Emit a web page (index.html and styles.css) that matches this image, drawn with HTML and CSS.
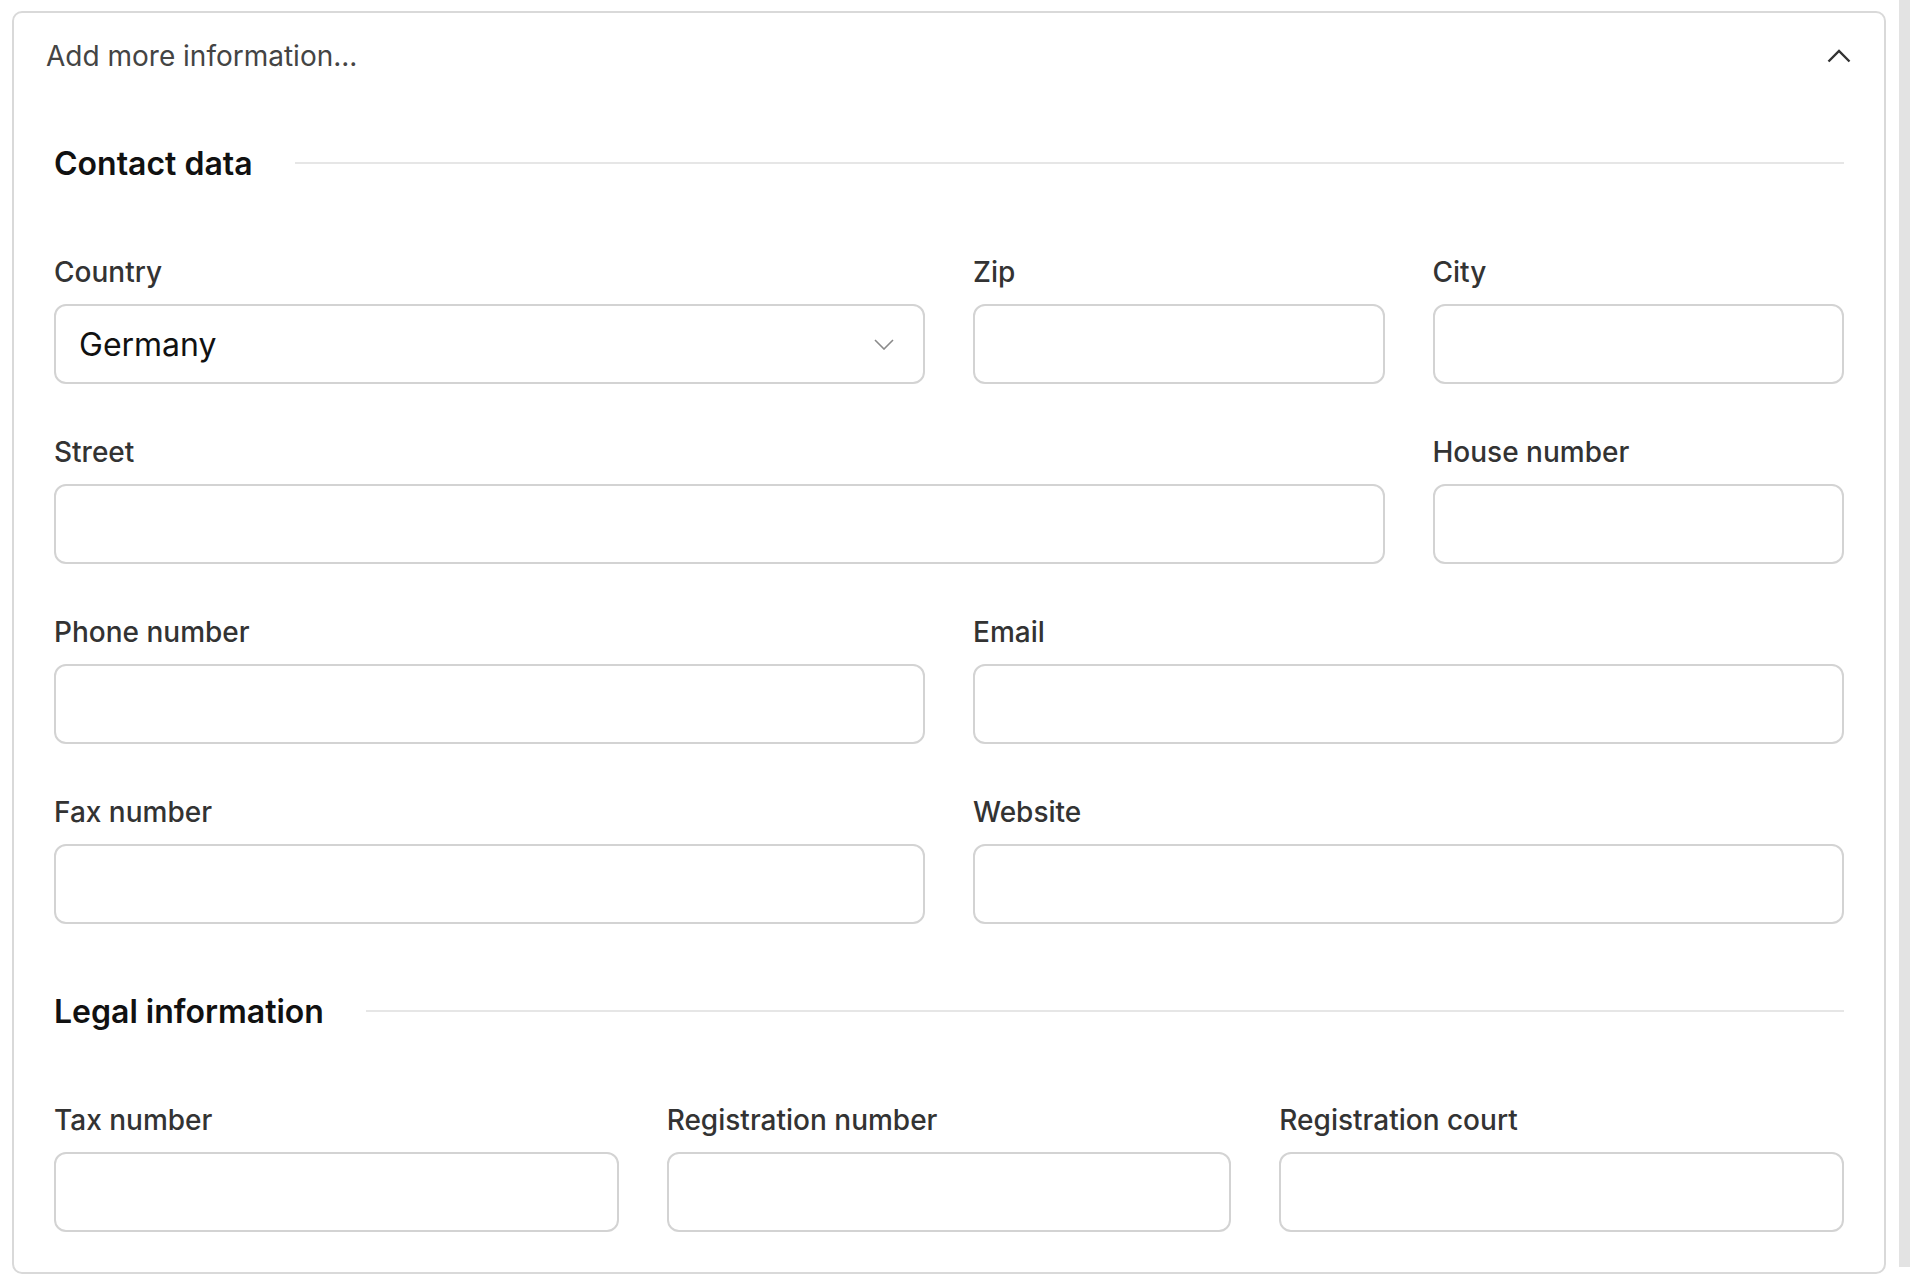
FILE: index.html
```html
<!DOCTYPE html>
<html lang="en">
<head>
    <meta charset="UTF-8">
    <meta name="viewport" content="width=device-width, initial-scale=1.0">
    <title>Add more information</title>
    <link rel="stylesheet" href="styles.css">
</head>
<body>
    <main class="page">
        <section class="panel">
            <div class="panel-header">
                <span class="panel-title">Add more information...</span>
                <svg class="chevron-up" width="24" height="14" viewBox="0 0 24 14">
                    <polyline points="1.5,12.5 12,2 22.5,12.5" fill="none" stroke="#333" stroke-width="2.4"/>
                </svg>
            </div>
            <div class="panel-body">
                <div class="section-title">
                    <h2>Contact data</h2>
                    <span class="rule"></span>
                </div>
                <div class="grid grid-4">
                    <div class="field span-2">
                        <label>Country</label>
                        <div class="select">
                            <span>Germany</span>
                            <svg width="20" height="11" viewBox="0 0 20 11">
                                <polyline points="1,1 10,10 19,1" fill="none" stroke="#8a8a8a" stroke-width="1.6"/>
                            </svg>
                        </div>
                    </div>
                    <div class="field">
                        <label for="zip">Zip</label>
                        <input type="text" id="zip">
                    </div>
                    <div class="field">
                        <label for="city">City</label>
                        <input type="text" id="city">
                    </div>
                    <div class="field span-3">
                        <label for="street">Street</label>
                        <input type="text" id="street">
                    </div>
                    <div class="field">
                        <label for="house">House number</label>
                        <input type="text" id="house">
                    </div>
                    <div class="field span-2">
                        <label for="phone">Phone number</label>
                        <input type="text" id="phone">
                    </div>
                    <div class="field span-2">
                        <label for="email">Email</label>
                        <input type="text" id="email">
                    </div>
                    <div class="field span-2">
                        <label for="fax">Fax number</label>
                        <input type="text" id="fax">
                    </div>
                    <div class="field span-2">
                        <label for="website">Website</label>
                        <input type="text" id="website">
                    </div>
                </div>
                <div class="section-title legal">
                    <h2>Legal information</h2>
                    <span class="rule"></span>
                </div>
                <div class="grid grid-3">
                    <div class="field">
                        <label for="tax">Tax number</label>
                        <input type="text" id="tax">
                    </div>
                    <div class="field">
                        <label for="regnum">Registration number</label>
                        <input type="text" id="regnum">
                    </div>
                    <div class="field">
                        <label for="regcourt">Registration court</label>
                        <input type="text" id="regcourt">
                    </div>
                </div>
            </div>
        </section>
    </main>
    <div class="scroll-track"></div>
</body>
</html>
```

FILE: styles.css
```css
body {
    margin: 0;
    font-family: Inter, "Noto Sans", sans-serif;
    background-color: #fff;
    display: flex;
    align-items: flex-start;
}
.page {
    flex: 1;
    padding: 11px 13px 0 12px;
}
.scroll-track {
    width: 11px;
    height: 1267px;
    background-color: #e3e3e3;
}
.panel {
    border: 2px solid #d9d9d9;
    border-radius: 10px;
}
.panel-header {
    display: flex;
    justify-content: space-between;
    align-items: center;
    padding: 20px 33px 20px 32px;
    height: 46px;
}
.panel-title {
    font-size: 28px;
    color: #444;
}
.panel-body {
    padding: 44px 40px 40px 40px;
}
.section-title {
    display: flex;
    align-items: center;
    gap: 42px;
    height: 40px;
    margin-bottom: 73px;
}
.section-title.legal {
    margin-top: 67px;
    margin-bottom: 73px;
}
.section-title h2 {
    margin: 0;
    font-size: 32px;
    font-weight: 600;
    color: #111;
    white-space: nowrap;
}
.rule {
    flex: 1;
    height: 2px;
    background-color: #e6e6e6;
}
.grid {
    display: grid;
    column-gap: 48px;
    row-gap: 52px;
}
.grid-4 {
    grid-template-columns: repeat(4, 1fr);
}
.grid-3 {
    grid-template-columns: repeat(3, 1fr);
}
.span-2 {
    grid-column: span 2;
}
.span-3 {
    grid-column: span 3;
}
.field {
    display: flex;
    flex-direction: column;
}
.field label {
    font-size: 28px;
    font-weight: 500;
    color: #333;
    line-height: 32px;
    margin-bottom: 16px;
}
input[type="text"], .select {
    box-sizing: border-box;
    width: 100%;
    height: 80px;
    border: 2px solid #d3d3d3;
    border-radius: 12px;
    background-color: #fff;
    font-family: inherit;
    font-size: 32px;
    padding: 0 23px;
}
.select {
    display: flex;
    align-items: center;
    justify-content: space-between;
    padding-right: 29px;
    color: #111;
}
```
